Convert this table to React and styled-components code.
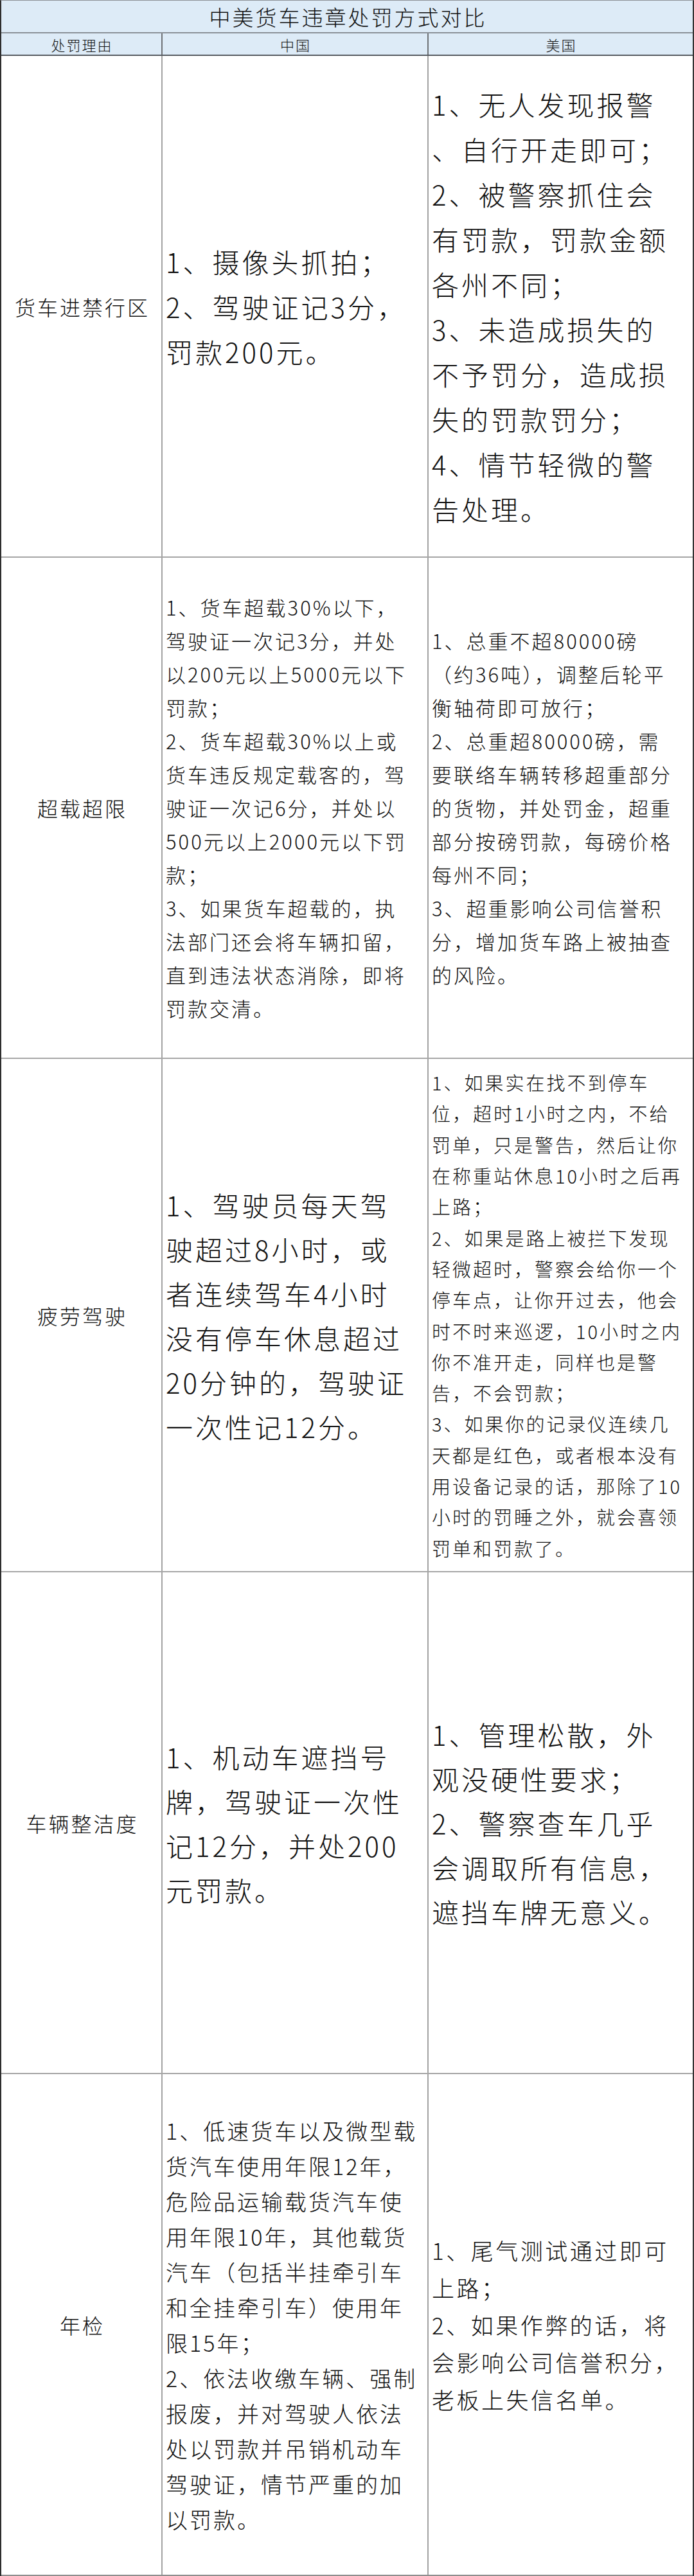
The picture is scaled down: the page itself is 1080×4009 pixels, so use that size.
import styled, { createGlobalStyle } from "styled-components";

const GlobalStyle = createGlobalStyle`
    html, body {
        margin: 0;
        padding: 0;
        background: #ffffff;
    }
    body {
        font-family: "Noto Sans CJK SC", "Noto Sans", sans-serif;
        font-weight: 300;
        color: #111111;
    }
`

const rows = [
    {
        height: 781,
        reason: "货车进禁行区",
        cn: { size: 42, ls: 4, lh: 70, lines: [
            "1、摄像头抓拍；",
            "2、驾驶证记3分，",
            "罚款200元。",
        ] },
        us: { size: 42, ls: 4, lh: 70, lines: [
            "1、无人发现报警",
            "、自行开走即可；",
            "2、被警察抓住会",
            "有罚款，罚款金额",
            "各州不同；",
            "3、未造成损失的",
            "不予罚分，造成损",
            "失的罚款罚分；",
            "4、情节轻微的警",
            "告处理。",
        ] },
    },
    {
        height: 780,
        reason: "超载超限",
        cn: { size: 31, ls: 3, lh: 52, lines: [
            "1、货车超载30%以下，",
            "驾驶证一次记3分，并处",
            "以200元以上5000元以下",
            "罚款；",
            "2、货车超载30%以上或",
            "货车违反规定载客的，驾",
            "驶证一次记6分，并处以",
            "500元以上2000元以下罚",
            "款；",
            "3、如果货车超载的，执",
            "法部门还会将车辆扣留，",
            "直到违法状态消除，即将",
            "罚款交清。",
        ] },
        us: { size: 31, ls: 3, lh: 52, lines: [
            "1、总重不超80000磅",
            "（约36吨），调整后轮平",
            "衡轴荷即可放行；",
            "2、总重超80000磅，需",
            "要联络车辆转移超重部分",
            "的货物，并处罚金，超重",
            "部分按磅罚款，每磅价格",
            "每州不同；",
            "3、超重影响公司信誉积",
            "分，增加货车路上被抽查",
            "的风险。",
        ] },
    },
    {
        height: 799,
        reason: "疲劳驾驶",
        cn: { size: 42, ls: 4, lh: 69, lines: [
            "1、驾驶员每天驾",
            "驶超过8小时，或",
            "者连续驾车4小时",
            "没有停车休息超过",
            "20分钟的，驾驶证",
            "一次性记12分。",
        ] },
        us: { size: 29, ls: 3, lh: 48.3, lines: [
            "1、如果实在找不到停车",
            "位，超时1小时之内，不给",
            "罚单，只是警告，然后让你",
            "在称重站休息10小时之后再",
            "上路；",
            "2、如果是路上被拦下发现",
            "轻微超时，警察会给你一个",
            "停车点，让你开过去，他会",
            "时不时来巡逻，10小时之内",
            "你不准开走，同样也是警",
            "告，不会罚款；",
            "3、如果你的记录仪连续几",
            "天都是红色，或者根本没有",
            "用设备记录的话，那除了10",
            "小时的罚睡之外，就会喜领",
            "罚单和罚款了。",
        ] },
    },
    {
        height: 781,
        reason: "车辆整洁度",
        cn: { size: 42, ls: 4, lh: 69, lines: [
            "1、机动车遮挡号",
            "牌，驾驶证一次性",
            "记12分，并处200",
            "元罚款。",
        ] },
        us: { size: 42, ls: 4, lh: 69, lines: [
            "1、管理松散，外",
            "观没硬性要求；",
            "2、警察查车几乎",
            "会调取所有信息，",
            "遮挡车牌无意义。",
        ] },
    },
    {
        height: 781,
        reason: "年检",
        cn: { size: 34, ls: 3, lh: 55, lines: [
            "1、低速货车以及微型载",
            "货汽车使用年限12年，",
            "危险品运输载货汽车使",
            "用年限10年，其他载货",
            "汽车（包括半挂牵引车",
            "和全挂牵引车）使用年",
            "限15年；",
            "2、依法收缴车辆、强制",
            "报废，并对驾驶人依法",
            "处以罚款并吊销机动车",
            "驾驶证，情节严重的加",
            "以罚款。",
        ] },
        us: { size: 35, ls: 3.5, lh: 58, lines: [
            "1、尾气测试通过即可",
            "上路；",
            "2、如果作弊的话，将",
            "会影响公司信誉积分，",
            "老板上失信名单。",
        ] },
    },
]

function TextBlock({ data }){
    return(
        <Paragraph $size={data.size} $ls={data.ls} $lh={data.lh}>
            {data.lines.map((line, i) => <Line key={i}>{line}</Line>)}
        </Paragraph>
    )
}

export default function App(){
    return(
        <>
            <GlobalStyle />
            <Sheet>
                <TitleRow>中美货车违章处罚方式对比</TitleRow>
                <HeaderRow>
                    <HeaderCell>处罚理由</HeaderCell>
                    <HeaderCell>中国</HeaderCell>
                    <HeaderCell $last>美国</HeaderCell>
                </HeaderRow>
                {rows.map((row, i) => (
                    <BodyRow key={i} $height={row.height} $last={i === rows.length - 1}>
                        <ReasonCell>{row.reason}</ReasonCell>
                        <TextCell><TextBlock data={row.cn} /></TextCell>
                        <TextCell $last><TextBlock data={row.us} /></TextCell>
                    </BodyRow>
                ))}
            </Sheet>
        </>
    )
}

const Sheet = styled.main`
    width: 1080px;
    box-sizing: border-box;
    border-left: 2px solid #2e2e2e;
    border-right: 2px solid #333333;
    border-top: 1px solid #8c9096;
    background: #ffffff;
`
const TitleRow = styled.header`
    height: 51px;
    box-sizing: border-box;
    border-bottom: 2px solid #8a9097;
    background: #ddebf7;
    display: flex;
    align-items: center;
    justify-content: center;
    font-size: 33px;
    letter-spacing: 3px;
    padding-left: 3px;
    color: #111111;
`
const HeaderRow = styled.div`
    height: 35px;
    box-sizing: border-box;
    display: grid;
    grid-template-columns: 251px 414px 1fr;
    background: #ddebf7;
    border-bottom: 2px solid #555a60;
`
const HeaderCell = styled.div`
    display: flex;
    align-items: center;
    justify-content: center;
    font-size: 22px;
    letter-spacing: 2px;
    padding-left: 2px;
    border-right: ${p => p.$last ? "none" : "2px solid #6e7276"};
`
const BodyRow = styled.section`
    height: ${p => p.$height}px;
    box-sizing: border-box;
    display: grid;
    grid-template-columns: 251px 414px 1fr;
    border-bottom: 2px solid ${p => p.$last ? "#8e8e8e" : "#a6a6a6"};
`
const ReasonCell = styled.div`
    display: flex;
    align-items: center;
    justify-content: center;
    font-size: 32px;
    letter-spacing: 3px;
    padding-left: 3px;
    border-right: 2px solid #a3a3a3;
`
const TextCell = styled.div`
    display: flex;
    align-items: center;
    padding-left: 5px;
    overflow: hidden;
    border-right: ${p => p.$last ? "none" : "2px solid #a3a3a3"};
`
const Paragraph = styled.div`
    font-size: ${p => p.$size}px;
    letter-spacing: ${p => p.$ls}px;
    line-height: ${p => p.$lh}px;
`
const Line = styled.span`
    display: block;
    white-space: nowrap;
`
